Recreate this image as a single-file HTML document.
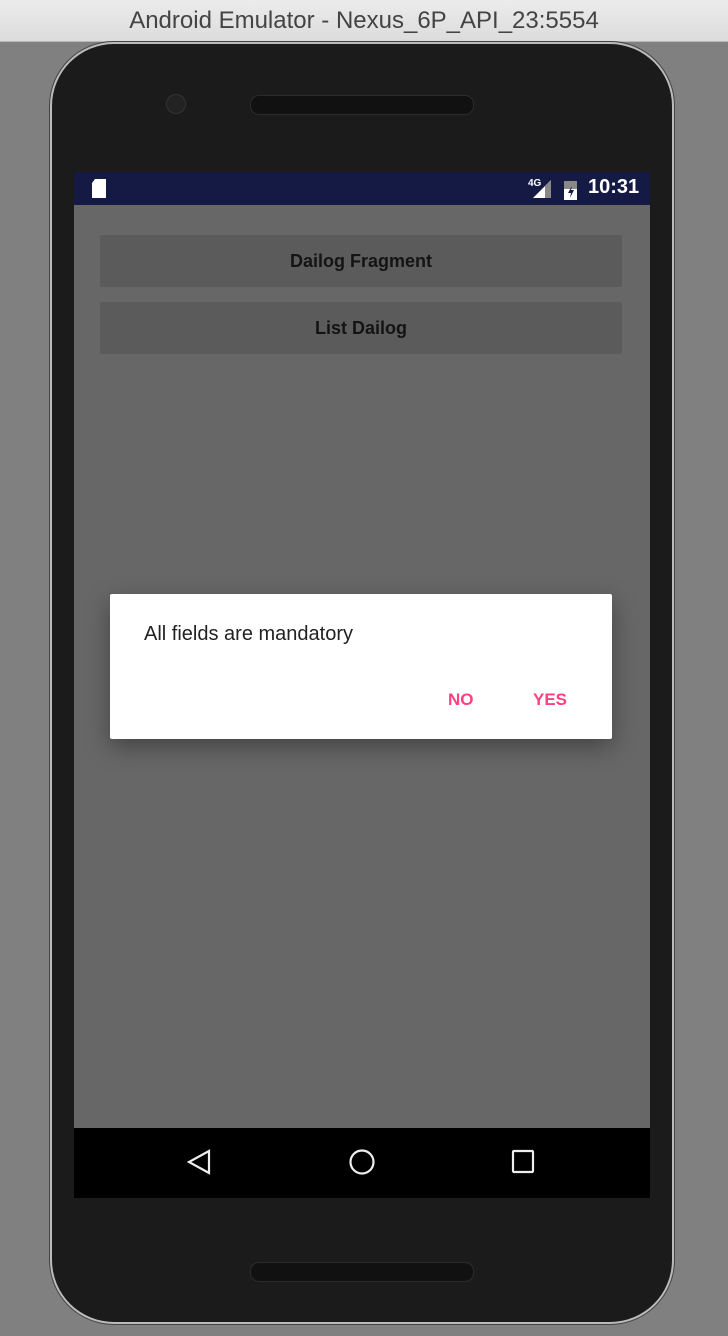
<!DOCTYPE html>
<html><head><style>
body{margin:0;width:728px;height:1336px;background:#808080;position:relative;overflow:hidden;font-family:"Liberation Sans",sans-serif}
.title{position:absolute;left:0;top:0;width:728px;height:41px;background:linear-gradient(#ececec,#dcdcdc);border-bottom:1px solid #b8b8b8;text-align:center;line-height:41px;font-size:24px;color:#444}
.phone{position:absolute;left:52px;top:44px;width:620px;height:1278px;border-radius:62px;background:#1b1b1b;box-shadow:0 0 0 2px #bbb,0 0 0 3px #444}
.abs{position:absolute}
.btn{position:absolute;left:100px;width:522px;height:52px;background:#5b5b5b;border-radius:2px;text-align:center;line-height:52px;font-size:18px;color:#141414;font-weight:bold}
</style></head><body>
<div class="title">Android Emulator - Nexus_6P_API_23:5554</div>
<div class="phone"></div>
<div class="abs" style="left:167px;top:95px;width:18px;height:18px;border-radius:50%;background:#222;box-shadow:0 0 0 1px #333"></div>
<div class="abs" style="left:250px;top:95px;width:222px;height:18px;border-radius:9px;background:#111;border:1px solid #2c2c2c"></div>
<div class="abs" style="left:250px;top:1262px;width:222px;height:18px;border-radius:9px;background:#111;border:1px solid #2c2c2c"></div>
<div class="abs" style="left:74px;top:172px;width:576px;height:33px;background:#151a44"></div>
<svg class="abs" style="left:90px;top:178px" width="18" height="22"><path d="M5 1h11v19H2V5z" fill="#fff"/></svg>
<div class="abs" style="left:528px;top:178px;font-size:10px;color:#fff;font-weight:bold">4G</div>
<svg class="abs" style="left:533px;top:180px" width="20" height="18"><path d="M0 18L18 0V18z" fill="#fff"/><path d="M12 6l6-6v18h-6z" fill="#888"/></svg>
<svg class="abs" style="left:564px;top:178px" width="14" height="22"><rect x="0" y="3" width="13" height="19" fill="#fff"/><rect x="0" y="3" width="13" height="8" fill="#888"/><path d="M8 8L4 15h3l-1 5 4-8H7z" fill="#151a44"/></svg>
<div class="abs" style="left:588px;top:176px;font-size:20px;color:#fff;font-weight:bold">10:31</div>
<div class="abs" style="left:74px;top:205px;width:576px;height:923px;background:#676767"></div>
<div class="btn" style="top:235px">Dailog Fragment</div>
<div class="btn" style="top:302px">List Dailog</div>
<div class="abs" style="left:110px;top:594px;width:502px;height:145px;background:#fff;border-radius:2px;box-shadow:0 8px 24px rgba(0,0,0,.35)"></div>
<div class="abs" style="left:144px;top:623px;font-size:20px;color:#222">All fields are mandatory</div>
<div class="abs" style="left:448px;top:690px;font-size:17px;color:#ff4081;font-weight:bold">NO</div>
<div class="abs" style="left:533px;top:690px;font-size:17px;color:#ff4081;font-weight:bold">YES</div>
<div class="abs" style="left:74px;top:1128px;width:576px;height:70px;background:#000"></div>
<svg class="abs" style="left:180px;top:1145px" width="370" height="34" fill="none" stroke="#eee" stroke-width="2.2">
<path d="M29 6L9 17L29 28Z"/><circle cx="182" cy="17" r="11.5"/><rect x="333" y="6" width="20" height="21" rx="1"/></svg>
</body></html>
